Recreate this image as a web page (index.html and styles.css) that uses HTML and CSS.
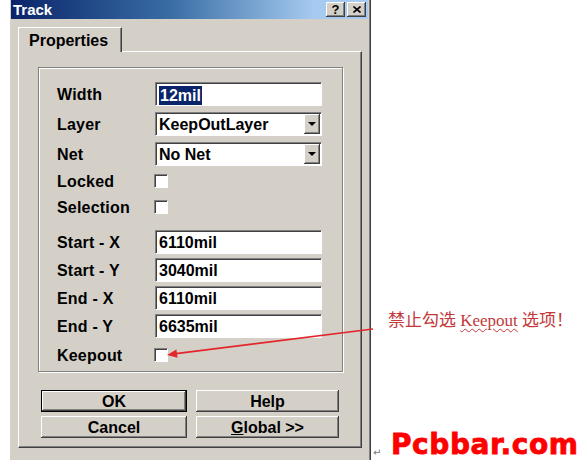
FILE: index.html
```html
<!DOCTYPE html>
<html lang="zh-CN">
<head>
  <meta charset="UTF-8" />
  <title>Track</title>
  <link rel="stylesheet" href="styles.css">
</head>
<body>

  <div class="page">

    <div class="window">
      <div class="titlebar">
        <span class="title">Track</span>
        <span class="cap-btn">?</span>
        <span class="cap-btn">
          <svg width="8" height="7" viewBox="0 0 8 7"><path d="M0.5 0.5 L7.5 6.5 M7.5 0.5 L0.5 6.5" stroke="#000" stroke-width="1.6" fill="none"/></svg>
        </span>
      </div>

      <div class="content">
        <div class="tab">Properties</div>

        <div class="sheet">
          <div class="group">
            <div class="row first">
              <span class="label">Width</span>
              <div class="field"><span class="selected">12mil</span></div>
            </div>
            <div class="row spaced">
              <span class="label">Layer</span>
              <div class="field">KeepOutLayer<span class="drop"><i></i></span></div>
            </div>
            <div class="row spaced">
              <span class="label">Net</span>
              <div class="field">No Net<span class="drop"><i></i></span></div>
            </div>
            <div class="row check">
              <span class="label">Locked</span>
              <span class="box"></span>
            </div>
            <div class="row check">
              <span class="label">Selection</span>
              <span class="box"></span>
            </div>
            <div class="row section">
              <span class="label">Start - X</span>
              <div class="field">6110mil</div>
            </div>
            <div class="row">
              <span class="label">Start - Y</span>
              <div class="field">3040mil</div>
            </div>
            <div class="row">
              <span class="label">End - X</span>
              <div class="field">6110mil</div>
            </div>
            <div class="row">
              <span class="label">End - Y</span>
              <div class="field">6635mil</div>
            </div>
            <div class="row check spaced">
              <span class="label">Keepout</span>
              <span class="box"></span>
            </div>
          </div>

          <div class="buttons">
            <button class="btn default">OK</button>
            <button class="btn">Help</button>
            <button class="btn">Cancel</button>
            <button class="btn"><u>G</u>lobal &gt;&gt;</button>
          </div>
        </div>
      </div>
    </div>

    <div class="aside">
      <div class="note">禁止勾选 <span class="typo">Keepout</span> 选项！</div>
      <div class="brand">
        <span class="ret">↵</span>
        <span class="logo">Pcbbar.com</span>
      </div>
    </div>

    <svg class="arrow" width="580" height="460" viewBox="0 0 580 460">
      <line x1="373" y1="329" x2="176" y2="353.6" stroke="#e3262b" stroke-width="1.6"/>
      <polygon points="167,355 177.6,357.8 176.4,349.6" fill="#e3262b"/>
    </svg>

  </div>

</body>
</html>
```

FILE: styles.css
```css
body {
  margin: 0;
  background-color: #fff;
  color: #000;
  font-family: "Liberation Sans", Arial, sans-serif;
  font-size: 16px;
  font-weight: bold;
}

.page {
  position: relative;
  display: flex;
  width: 580px;
  height: 460px;
  overflow: hidden;
}

/* dialog window */

.window {
  margin-left: 10px;
  width: 361px;
  height: 460px;
  box-sizing: border-box;
  background-color: #d4d0c8;
  border-left: 1px solid #d4d0c8;
  border-right: 1px solid #404040;
  padding: 0 2px 0 0;
  box-shadow: inset -1px 0 #808080;
}

.titlebar {
  height: 19px;
  display: flex;
  align-items: center;
  gap: 2px;
  padding: 0 2px 0 2px;
  background: linear-gradient(to right, #0a246a 0%, #3a6ea5 45%, #a6caf0 85%);
}

.title {
  flex: 1;
  color: #fff;
  font-size: 15px;
}

.cap-btn {
  width: 19px;
  height: 15px;
  box-sizing: border-box;
  display: flex;
  align-items: center;
  justify-content: center;
  background-color: #d4d0c8;
  font-size: 13px;
  line-height: 15px;
  box-shadow: inset -1px -1px #404040, inset 1px 1px #fff, inset -2px -2px #808080;
}

.content {
  padding: 8px 6px 0 7px;
}

.tab {
  position: relative;
  z-index: 1;
  display: inline-block;
  height: 25px;
  line-height: 24px;
  padding: 1px 13px 0 10px;
  margin-bottom: -1px;
  background-color: #d4d0c8;
  border-top: 1px solid #fff;
  border-left: 1px solid #fff;
  border-right: 1px solid #404040;
  box-shadow: inset -1px 0 #808080;
  box-sizing: border-box;
}

.sheet {
  height: 397px;
  box-sizing: border-box;
  padding: 15px 18px 0 19px;
  border-top: 1px solid #fff;
  border-left: 1px solid #fff;
  border-right: 1px solid #404040;
  border-bottom: 1px solid #404040;
  box-shadow: inset -1px -1px #808080;
}

.group {
  border: 1px solid #808080;
  box-shadow: inset 1px 1px #fff, 1px 1px #fff;
  padding: 14px 20px 5px 18px;
  display: flex;
  flex-direction: column;
}

.row {
  display: flex;
  align-items: center;
  height: 24px;
  margin-top: 4px;
}

.row.first {
  margin-top: 0;
}

.row.check {
  height: 22px;
}

.row.spaced {
  margin-top: 6px;
}

.row.section {
  margin-top: 12px;
}

.label {
  width: 98px;
  flex-shrink: 0;
  padding-top: 2px;
  letter-spacing: 0.2px;
}

.field {
  width: 167px;
  height: 24px;
  box-sizing: border-box;
  display: flex;
  align-items: center;
  padding: 2px 0 0 3px;
  background-color: #fff;
  border-top: 1px solid #808080;
  border-left: 1px solid #808080;
  border-right: 1px solid #fff;
  border-bottom: 1px solid #fff;
  box-shadow: inset 1px 1px #404040;
}

.selected {
  background-color: #0a246a;
  color: #fff;
  padding: 0 1px;
  line-height: 19px;
}

.drop {
  margin-left: auto;
  margin-right: 1px;
  margin-top: -2px;
  width: 16px;
  height: 20px;
  box-sizing: border-box;
  display: flex;
  align-items: center;
  justify-content: center;
  background-color: #d4d0c8;
  box-shadow: inset -1px -1px #404040, inset 1px 1px #fff, inset -2px -2px #808080;
}

.drop i {
  width: 0;
  height: 0;
  border-left: 4px solid transparent;
  border-right: 4px solid transparent;
  border-top: 4px solid #000;
}

.box {
  width: 14px;
  height: 14px;
  margin-left: -1px;
  box-sizing: border-box;
  background-color: #fff;
  border-top: 1px solid #808080;
  border-left: 1px solid #808080;
  border-right: 1px solid #fff;
  border-bottom: 1px solid #fff;
  box-shadow: inset 1px 1px #404040;
}

.buttons {
  display: grid;
  grid-template-columns: 146px 143px;
  gap: 4px 9px;
  margin: 18px 0 0 3px;
}

.btn {
  height: 22px;
  padding: 2px 0 0;
  font: inherit;
  color: #000;
  background-color: #d4d0c8;
  border: none;
  box-shadow: inset -1px -1px #404040, inset 1px 1px #fff, inset -2px -2px #808080;
}

.btn.default {
  border: 1px solid #000;
}

/* annotations right of the dialog */

.aside {
  flex: 1;
  display: flex;
  flex-direction: column;
  padding-left: 2px;
}

.note {
  margin: 311px 0 0 15px;
  font-family: "Liberation Serif", "Noto Sans CJK SC", serif;
  font-weight: normal;
  font-size: 17px;
  line-height: 20px;
  color: #c4383a;
  white-space: nowrap;
}

.typo {
  text-decoration: underline wavy #c4383a;
  text-decoration-thickness: 1px;
  text-underline-offset: 2px;
}

.brand {
  margin-top: auto;
  margin-bottom: 1px;
  display: flex;
  align-items: flex-end;
}

.ret {
  width: 8px;
  font-family: "DejaVu Sans", sans-serif;
  font-weight: normal;
  font-size: 10px;
  line-height: 12px;
  color: #777;
}

.logo {
  margin-left: 10px;
  font-family: "DejaVu Sans", sans-serif;
  font-weight: bold;
  font-size: 28px;
  line-height: 28px;
  letter-spacing: 0.6px;
  color: #ff0000;
  -webkit-text-stroke: 0.8px #ff0000;
}

.arrow {
  position: absolute;
  left: 0;
  top: 0;
  pointer-events: none;
}
```
